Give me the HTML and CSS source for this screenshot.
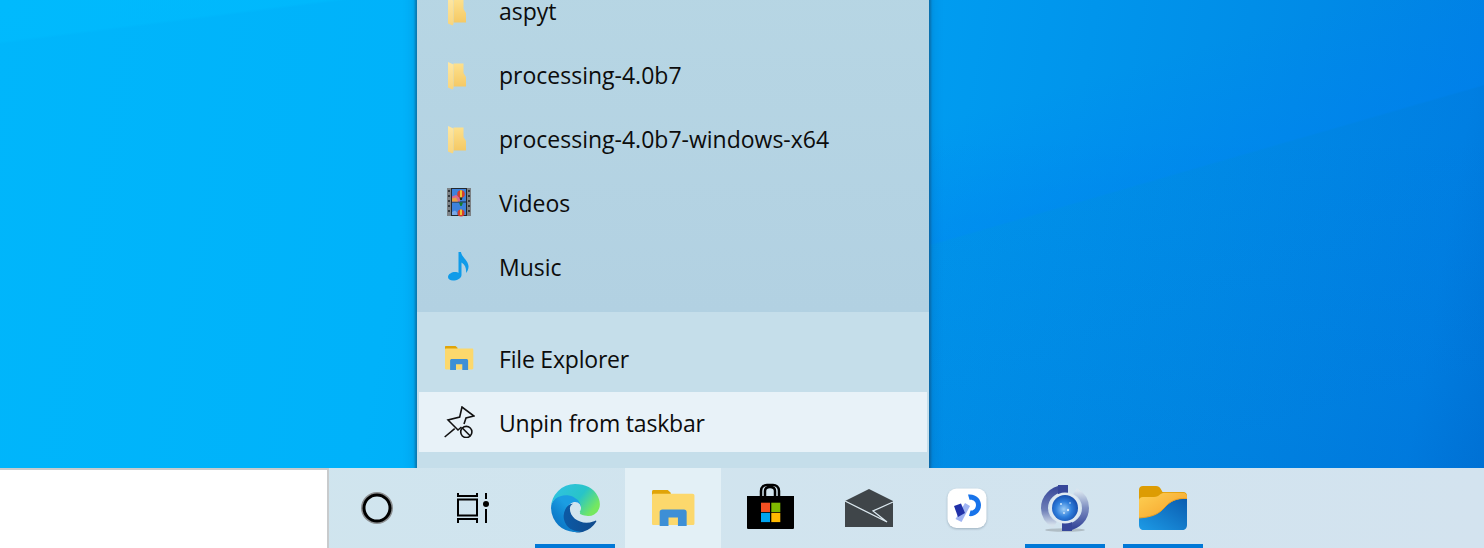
FILE: index.html
```html
<!DOCTYPE html>
<html lang="en">
<head>
<meta charset="utf-8">
<title>Taskbar jump list</title>
<link rel="stylesheet" href="styles.css">
</head>
<body>
<svg class="defs" width="0" height="0" aria-hidden="true">
  <defs>
    <linearGradient id="leaf" x1="0" y1="0" x2="0" y2="1"><stop offset="0" stop-color="#fde7a4"/><stop offset="1" stop-color="#f8d57c"/></linearGradient>
    <linearGradient id="fbody" x1="0" y1="0" x2="0" y2="1"><stop offset="0" stop-color="#fde08c"/><stop offset="1" stop-color="#f5c965"/></linearGradient>
    <g id="folder">
      <path d="M10.500 3.500H20.500V13L23 17V26.500H10.500Z" fill="url(#fbody)"/>
      <path d="M5 2L10.500 4.500V28L9.500 29.500L5 27.500Z" fill="url(#leaf)"/>
    </g>
    <g id="explorer">
      <path d="M2 3C2 2.400 2.400 2 3 2H12.500L14.500 3.800V6H2Z" fill="#e0a408"/>
      <path d="M2 5.500C2 5 2.400 4.500 3 4.500H29C29.800 4.500 30.300 5 30.300 5.800V24.300C30.300 25 29.800 25.400 29 25.400H3C2.400 25.400 2 25 2 24.300Z" fill="#fcd86c"/>
      <path d="M7.100 26V16.700C7.100 15.600 7.800 15 8.900 15H23.300C24.400 15 25.100 15.600 25.100 16.700V26H19.300V20.300H13V26Z" fill="#3d8fd6"/>
    </g>
  </defs>
</svg>
<div class="desktop">
  <div class="wallpaper"></div>
  <section class="jumplist">
    <ul class="rows recent">
      <li class="row"><svg class="ico" viewBox="0 0 32 32"><use href="#folder"/></svg><span class="label">aspyt</span></li>
      <li class="row"><svg class="ico" viewBox="0 0 32 32"><use href="#folder"/></svg><span class="label">processing-4.0b7</span></li>
      <li class="row"><svg class="ico" viewBox="0 0 32 32"><use href="#folder"/></svg><span class="label">processing-4.0b7-windows-x64</span></li>
      <li class="row">
        <svg class="ico" viewBox="0 0 32 32">
          <rect x="4" y="0" width="24" height="28" fill="#7d8286"/>
          <g fill="#33393e">
            <rect x="5" y="2" width="2" height="2"/><rect x="5" y="7" width="2" height="2"/><rect x="5" y="12" width="2" height="2"/><rect x="5" y="17" width="2" height="2"/><rect x="5" y="22" width="2" height="2"/>
            <rect x="25" y="2" width="2" height="2"/><rect x="25" y="7" width="2" height="2"/><rect x="25" y="12" width="2" height="2"/><rect x="25" y="17" width="2" height="2"/><rect x="25" y="22" width="2" height="2"/>
          </g>
          <rect x="8" y="0" width="16" height="28" fill="#23282c"/>
          <rect x="9" y="1" width="14" height="12.500" fill="#3d82dc"/>
          <rect x="9" y="14.500" width="14" height="12.500" fill="#3d82dc"/>
          <path d="M9 8.500L13 7L17 9V13.500H9Z" fill="#d86a8c"/><path d="M9 10.500L13 9.500L15 13.500H9Z" fill="#e9a23c"/>
          <path d="M9 24L12 22.500L14 24.500V27H9Z" fill="#7aa8e8"/>
          <circle cx="18" cy="6" r="3.800" fill="#d6402c"/><path d="M17 2.300H19V9.600H17Z" fill="#eec132"/><path d="M16.500 9.500H19.500L18.800 12H17.200Z" fill="#1d2a1c"/>
          <circle cx="18" cy="25" r="3.500" fill="#d6402c"/><path d="M17 21.500H19V27H17Z" fill="#eec132"/>
          <path d="M16 14.500H20L18.700 18H17.300Z" fill="#157a2a"/>
        </svg>
        <span class="label">Videos</span>
      </li>
      <li class="row">
        <svg class="ico" viewBox="0 0 32 32"><path d="M15.500 0H18C18.500 5 25 8 25.500 14C25.700 17 24.500 19 23 21C23.500 17 22.500 13 18.500 10.500V23C18.500 26.500 14 28.500 10 28.500C7 28.500 5 27 5 25C5 22 9 20 12 20C13.500 20 15 20.300 15.500 21Z" fill="#0f9be9"/></svg>
        <span class="label">Music</span>
      </li>
    </ul>
    <ul class="rows tasks">
      <li class="row"><svg class="ico" viewBox="0 0 32 32"><use href="#explorer"/></svg><span class="label">File Explorer</span></li>
      <li class="row row-hover">
        <svg class="ico" viewBox="0 0 32 32" fill="none" stroke="#111" stroke-width="1.600">
          <path d="M1.700 31L11.700 22.700"/>
          <path d="M18.500 21L15 24L5 14L16.700 11L19 1L31 10L23 12L21 18"/>
          <circle cx="23.300" cy="26" r="5.600"/>
          <path d="M19.300 22L27.300 30"/>
        </svg>
        <span class="label">Unpin from taskbar</span>
      </li>
    </ul>
  </section>
  <nav class="taskbar">
    <div class="searchbox"></div>
    <div class="cell">
      <svg class="t32" viewBox="0 0 32 32"><circle cx="16" cy="16" r="15" fill="none" stroke="#8d9092" stroke-width="2"/><circle cx="16" cy="16" r="13" fill="none" stroke="#000" stroke-width="3"/></svg>
    </div>
    <div class="cell">
      <svg class="t-task" viewBox="0 0 32 32" fill="none" stroke="#000" stroke-width="2">
        <path d="M1 1V4H20V1"/>
        <rect x="1" y="7.500" width="19" height="16"/>
        <path d="M1 31V27H20V31"/>
        <path d="M29 1V7M29 17V31"/>
        <circle cx="29" cy="12" r="3" fill="#000" stroke="none"/>
      </svg>
    </div>
    <div class="apps">
      <div class="cell running">
        <svg class="t48" viewBox="0 0 256 256">
          <defs>
            <linearGradient id="e1" x1=".1" y1=".6" x2="1" y2=".6"><stop offset="0" stop-color="#0c59a4"/><stop offset="1" stop-color="#114a8b"/></linearGradient>
            <linearGradient id="e2" x1=".6" y1=".4" x2=".15" y2=".95"><stop offset="0" stop-color="#1b9de2"/><stop offset=".5" stop-color="#0f84d0"/><stop offset="1" stop-color="#0c6fc0"/></linearGradient>
            <linearGradient id="e3" x1=".1" y1=".2" x2=".95" y2=".65"><stop offset="0" stop-color="#2fc2df"/><stop offset=".55" stop-color="#28c4c8"/><stop offset="1" stop-color="#75e85f"/></linearGradient>
          </defs>
          <path d="M235.700 195.500a93.700 93.700 0 0 1-10.600 4.700 101.900 101.900 0 0 1-35.900 6.400c-47.300 0-88.500-32.500-88.500-74.300a31.500 31.500 0 0 1 16.400-27.300c-42.800 1.800-53.800 46.400-53.800 72.500 0 73.900 68.100 81.400 82.800 81.400 7.900 0 19.800-2.300 27-4.600l1.300-.4a128.300 128.300 0 0 0 66.600-52.800 4 4 0 0 0-5.300-5.600Z" fill="url(#e1)"/>
          <path d="M105.700 241.400A79.200 79.200 0 0 1 83 220a81 81 0 0 1 29.600-120.400c3.200-1.500 8.500-4.100 15.600-4a32.400 32.400 0 0 1 25.700 13 31.900 31.900 0 0 1 6.300 18.700c0-.2 24.500-79.600-80-79.600-43.900 0-80 41.600-80 78.200a130.200 130.200 0 0 0 12.100 56 128 128 0 0 0 156.400 67 75.500 75.500 0 0 1-63-8.500Z" fill="url(#e2)"/>
          <path d="M157 148.800c-.9 1-3.400 2.500-3.400 5.600 0 2.600 1.700 5.200 4.800 7.300 14.300 10 41.400 8.600 41.500 8.600a59.600 59.600 0 0 0 30.300-8.300 61.400 61.400 0 0 0 30.400-52.900c.3-22.400-8-37.300-11.300-43.900C228 20.100 182.700 0 128 0A128 128 0 0 0 0 126.200c.5-36.500 36.800-66 80-66 3.500 0 23.500.3 42 10a72.600 72.600 0 0 1 31 29.300c6.100 10.600 7.200 24.100 7.200 29.500s-2.700 13.300-7.800 19.900Z" fill="url(#e3)"/>
        </svg>
      </div>
      <div class="cell active">
        <svg class="t48" viewBox="0 -2 32 32"><use href="#explorer"/></svg>
      </div>
      <div class="cell">
        <svg class="t48" viewBox="1 0 48 48">
          <path d="M15 12V7C15 3 18 1 21 1H27C30 1 33 3 33 7V12" fill="none" stroke="#000" stroke-width="2.500"/>
          <path d="M19 12V7C19 4 21 3 24 3C27 3 29 4 29 7V12" fill="none" stroke="#000" stroke-width="2.500"/>
          <path d="M1 12H48V44C48 44.800 47.200 45 46.500 45H2.500C1.800 45 1 44.800 1 44Z" fill="#000"/>
          <rect x="15" y="18.700" width="9" height="9.300" fill="#f25022"/>
          <rect x="25.300" y="18.700" width="9" height="9.300" fill="#7fba00"/>
          <rect x="15" y="28.800" width="9" height="9.300" fill="#00a4ef"/>
          <rect x="25.300" y="28.800" width="9" height="9.300" fill="#ffb900"/>
        </svg>
      </div>
      <div class="cell">
        <svg class="t48" viewBox="0 0 48 48">
          <path d="M0 17L24 5L48 17V43H0Z" fill="#3f4549"/>
          <path d="M0 17L42 38L28 27L48 18" fill="none" stroke="#dbe8ef" stroke-width="1.300"/>
          <path d="M28 27L42 38L33.500 31Z" fill="#dbe8ef"/>
        </svg>
      </div>
      <div class="cell">
        <svg class="t48" viewBox="0 0 48 48">
          <rect x="4.500" y="4.500" width="39" height="39.500" rx="9" fill="#fff" class="tile"/>
          <path d="M22 19L27 22L18.500 38L12.500 35Z" fill="#9fb3f2"/>
          <path d="M11 22L18 19.500L22 29L15 33Z" fill="#2030a8"/>
          <path d="M25 10.500C33 9.500 38 15 38 21C38 28 32 33 26 32L27.500 26.500C30.500 27 33 24.500 33 21C33 17.500 30 15.300 26.500 15.800Z" fill="#1773ea"/>
        </svg>
      </div>
      <div class="cell running">
        <svg class="t48 soft" viewBox="0 0 48 48">
          <defs>
            <radialGradient id="g1" cx=".45" cy=".55" r=".6"><stop offset="0" stop-color="#9ccdf6"/><stop offset=".5" stop-color="#2f7fdc"/><stop offset="1" stop-color="#1247a8"/></radialGradient>
            <linearGradient id="g2" x1="0" y1="0" x2="0" y2="1"><stop offset="0" stop-color="#3c4c9c"/><stop offset=".6" stop-color="#6f80b8"/><stop offset="1" stop-color="#d5e1ec"/></linearGradient>
            <linearGradient id="g3" x1="0" y1="1" x2="0" y2="0"><stop offset="0" stop-color="#37479a"/><stop offset=".55" stop-color="#7f90c2"/><stop offset="1" stop-color="#d8e4ee"/></linearGradient>
          </defs>
          <ellipse cx="24" cy="46" rx="20" ry="1.800" fill="#9aa3a8" opacity=".6"/>
          <path d="M22 4.500C11 6 3.500 14 3.500 24C3.500 31 7 37 14 41" fill="none" stroke="url(#g2)" stroke-width="7"/>
          <path d="M17 1H27V10H17Z" fill="#37479a"/>
          <path d="M26 43.500C37 42 44.500 34 44.500 24C44.500 17 41 11 34 7" fill="none" stroke="url(#g3)" stroke-width="7"/>
          <path d="M21 38H31V47H21Z" fill="#37479a"/>
          <circle cx="24" cy="24" r="15.500" fill="#dfe9f1"/>
          <circle cx="24" cy="24" r="13" fill="url(#g1)"/>
          <g fill="#d5e8fb"><circle cx="20" cy="20" r="1"/><circle cx="27" cy="26" r="1.200"/><circle cx="23" cy="29" r=".9"/><circle cx="29" cy="19" r=".8"/></g>
        </svg>
      </div>
      <div class="cell running">
        <svg class="t48" viewBox="0 0 48 48">
          <defs>
            <linearGradient id="f1" x1="0" y1="0" x2="1" y2="1"><stop offset="0" stop-color="#fdd053"/><stop offset="1" stop-color="#f59a23"/></linearGradient>
            <linearGradient id="f2" x1="0" y1="1" x2="1" y2="0"><stop offset="0" stop-color="#1d9be6"/><stop offset="1" stop-color="#0a5cb0"/></linearGradient>
          </defs>
          <path d="M0 28V6C0 3.500 1.500 2 4 2H17C19.500 2 20.500 3 21.500 4.500L23.500 8H44C46.500 8 48 9.500 48 12V30Z" fill="#dd9c03"/>
          <path d="M0 38V16.500C0 14.500 1.500 13 4 13H15C18 13 19.500 11.800 21 10.500C22.500 9.300 24 8.800 26 8.800H44C46.500 8.800 48 10.500 48 13V38Z" fill="url(#f1)"/>
          <path d="M0 34C12 33 19 31 26 23C31 17.500 37 13.800 48 14.500V41C48 44 46 46 43.500 46H4.500C2 46 0 44 0 41Z" fill="url(#f2)"/>
          <path d="M0 34C12 33 19 31 26 23C31 17.500 37 13.800 48 14.500" fill="none" stroke="#f0a020" stroke-width="1"/>
        </svg>
      </div>
    </div>
  </nav>
</div>
</body>
</html>
```
FILE: styles.css
```css
* { box-sizing: border-box; }
html, body { margin: 0; padding: 0; height: 100%; }
body { font-family: "Open Sans", "Noto Sans", sans-serif; overflow: hidden; background: #00a8f4; }
.defs { display: block; position: absolute; }
ul { list-style: none; margin: 0; padding: 0; }

.desktop {
  position: relative;
  width: 1484px;
  height: 548px;
  overflow: hidden;
  display: flex;
  flex-direction: column;
}
.wallpaper {
  flex: 1;
  background-color: #00a8f4;
  background-image:
    linear-gradient(172.8deg, rgba(0,190,255,.5) 0, rgba(0,190,255,.45) 41px, rgba(0,190,255,0) 44px),
    linear-gradient(163.9deg, rgba(0,110,240,0) 120px, rgba(0,125,245,.3) 235px, rgba(0,70,190,.06) 237px, rgba(0,70,190,0) 520px),
    linear-gradient(180deg, rgba(0,60,170,0) 25%, rgba(0,60,170,.12) 85%),
    linear-gradient(100deg, #00b6fb 0, #00b2fa 28%, #00a8f5 50%, #009cf0 60%, #008ee8 80%, #0082e4 95%, #0078da 100%);
  background-size: auto, 556px 548px, 556px 548px, auto;
  background-position: 0 0, right top, right top, 0 0;
  background-repeat: no-repeat;
}

.jumplist {
  position: absolute;
  left: 417px;
  bottom: 80px;
  width: 512px;
  background: #b5d4e3;
  box-shadow: 0 0 2px 2px rgba(20,75,115,.5), 0 0 12px 2px rgba(0,40,90,.16);
}
.rows { display: flex; flex-direction: column; }
.recent {
  padding-bottom: 12px;
  background: linear-gradient(180deg, #b7d6e4, #b2d1e2);
}
.tasks {
  padding: 16px 2px;
  background: #c5deea;
}
.row {
  height: 64px;
  display: flex;
  align-items: center;
  gap: 24px;
  padding-left: 26px;
}
.tasks .row { padding-left: 24px; }
.tasks .row-hover { height: 60px; background: #e8f2f8; }
.ico { width: 32px; height: 32px; flex: none; }
.label {
  font-size: 23px;
  line-height: 22px;
  padding-bottom: 2px;
  color: #0c0c0c;
  white-space: nowrap;
}
.tasks .label { letter-spacing: -.2px; }
.tasks .row-hover .label { padding-bottom: 0; padding-top: 2px; }

.taskbar {
  height: 80px;
  flex: none;
  display: flex;
  background: linear-gradient(90deg, #cfe5ee, #d3e3ef);
  position: relative;
}
.searchbox {
  width: 329px;
  flex: none;
  background: #fff;
  border-top: 2px solid #c8cbcd;
  border-right: 2px solid #c8cbcd;
}
.apps { display: flex; gap: 2px; margin-left: 6px; }
.cell {
  width: 96px;
  display: flex;
  align-items: center;
  justify-content: center;
  position: relative;
}
.cell.active { background: #e3f0f6; }
.cell.running::after {
  content: "";
  position: absolute;
  left: 8px;
  right: 8px;
  bottom: 0;
  height: 4px;
  background: #0078d7;
}
.t32 { width: 32px; height: 32px; }
.t-task { width: 32px; height: 32px; }
.t48 { width: 48px; height: 48px; overflow: visible; }
.soft { filter: blur(.45px); }
.tile { filter: drop-shadow(0 1px 1px rgba(60,80,100,.35)); }
```
